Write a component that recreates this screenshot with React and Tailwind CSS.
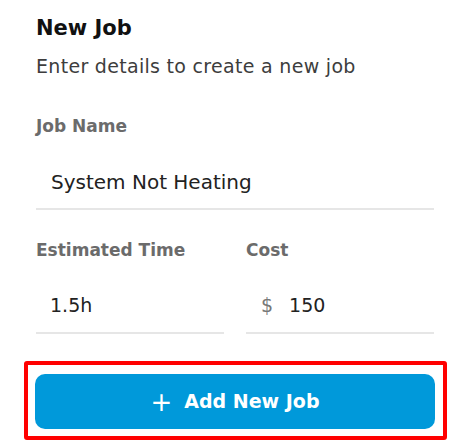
import React from "react";

export default function App() {
  const font = { fontFamily: "'DejaVu Sans', Inter, sans-serif" };
  return (
    <div className="w-[453px] h-[447px] bg-white overflow-hidden" style={font}>
      <div className="ml-[36px] w-[398px] pt-[14px]">
        <h1 className="text-[21px] leading-[28px] font-bold text-[#111111]">New Job</h1>
        <p className="mt-[10px] text-[19px] leading-[28px] tracking-[0.3px] text-[#3d3d3d]">Enter details to create a new job</p>

        <div className="mt-[34px]">
          <label className="block text-[17px] leading-[24px] font-bold text-[#6b6b6b]">Job Name</label>
          <div className="mt-[18px] h-[54px] border-b-2 border-[#e6e6e6] pl-[15px] flex items-center text-[20px] text-[#222222]">
            System Not Heating
          </div>
        </div>

        <div className="mt-[28px] grid grid-cols-2 gap-[22px]">
          <div>
            <label className="block text-[17px] leading-[24px] font-bold text-[#6b6b6b]">Estimated Time</label>
            <div className="mt-[16px] h-[56px] border-b-2 border-[#e6e6e6] pl-[14px] flex items-center text-[19px] text-[#222222]">
              1.5h
            </div>
          </div>
          <div>
            <label className="block text-[17px] leading-[24px] font-bold text-[#6b6b6b]">Cost</label>
            <div className="mt-[16px] h-[56px] border-b-2 border-[#e6e6e6] pl-[15px] flex items-center gap-[16px] text-[19px] text-[#222222]">
              <span className="text-[#777777]">$</span>
              <span>150</span>
            </div>
          </div>
        </div>
      </div>

      <div className="ml-[24px] mt-[27px] w-[423px] h-[79px] border-4 border-[#ff0000] rounded-[3px] pl-[7px] pr-[8px] pt-[9px]">
        <button className="w-full h-[55px] rounded-[10px] bg-[#0099da] text-white text-[19px] font-bold flex items-center justify-center gap-[12px]">
          <span className="text-[26px] font-normal leading-none">+</span>
          <span>Add New Job</span>
        </button>
      </div>
    </div>
  );
}
